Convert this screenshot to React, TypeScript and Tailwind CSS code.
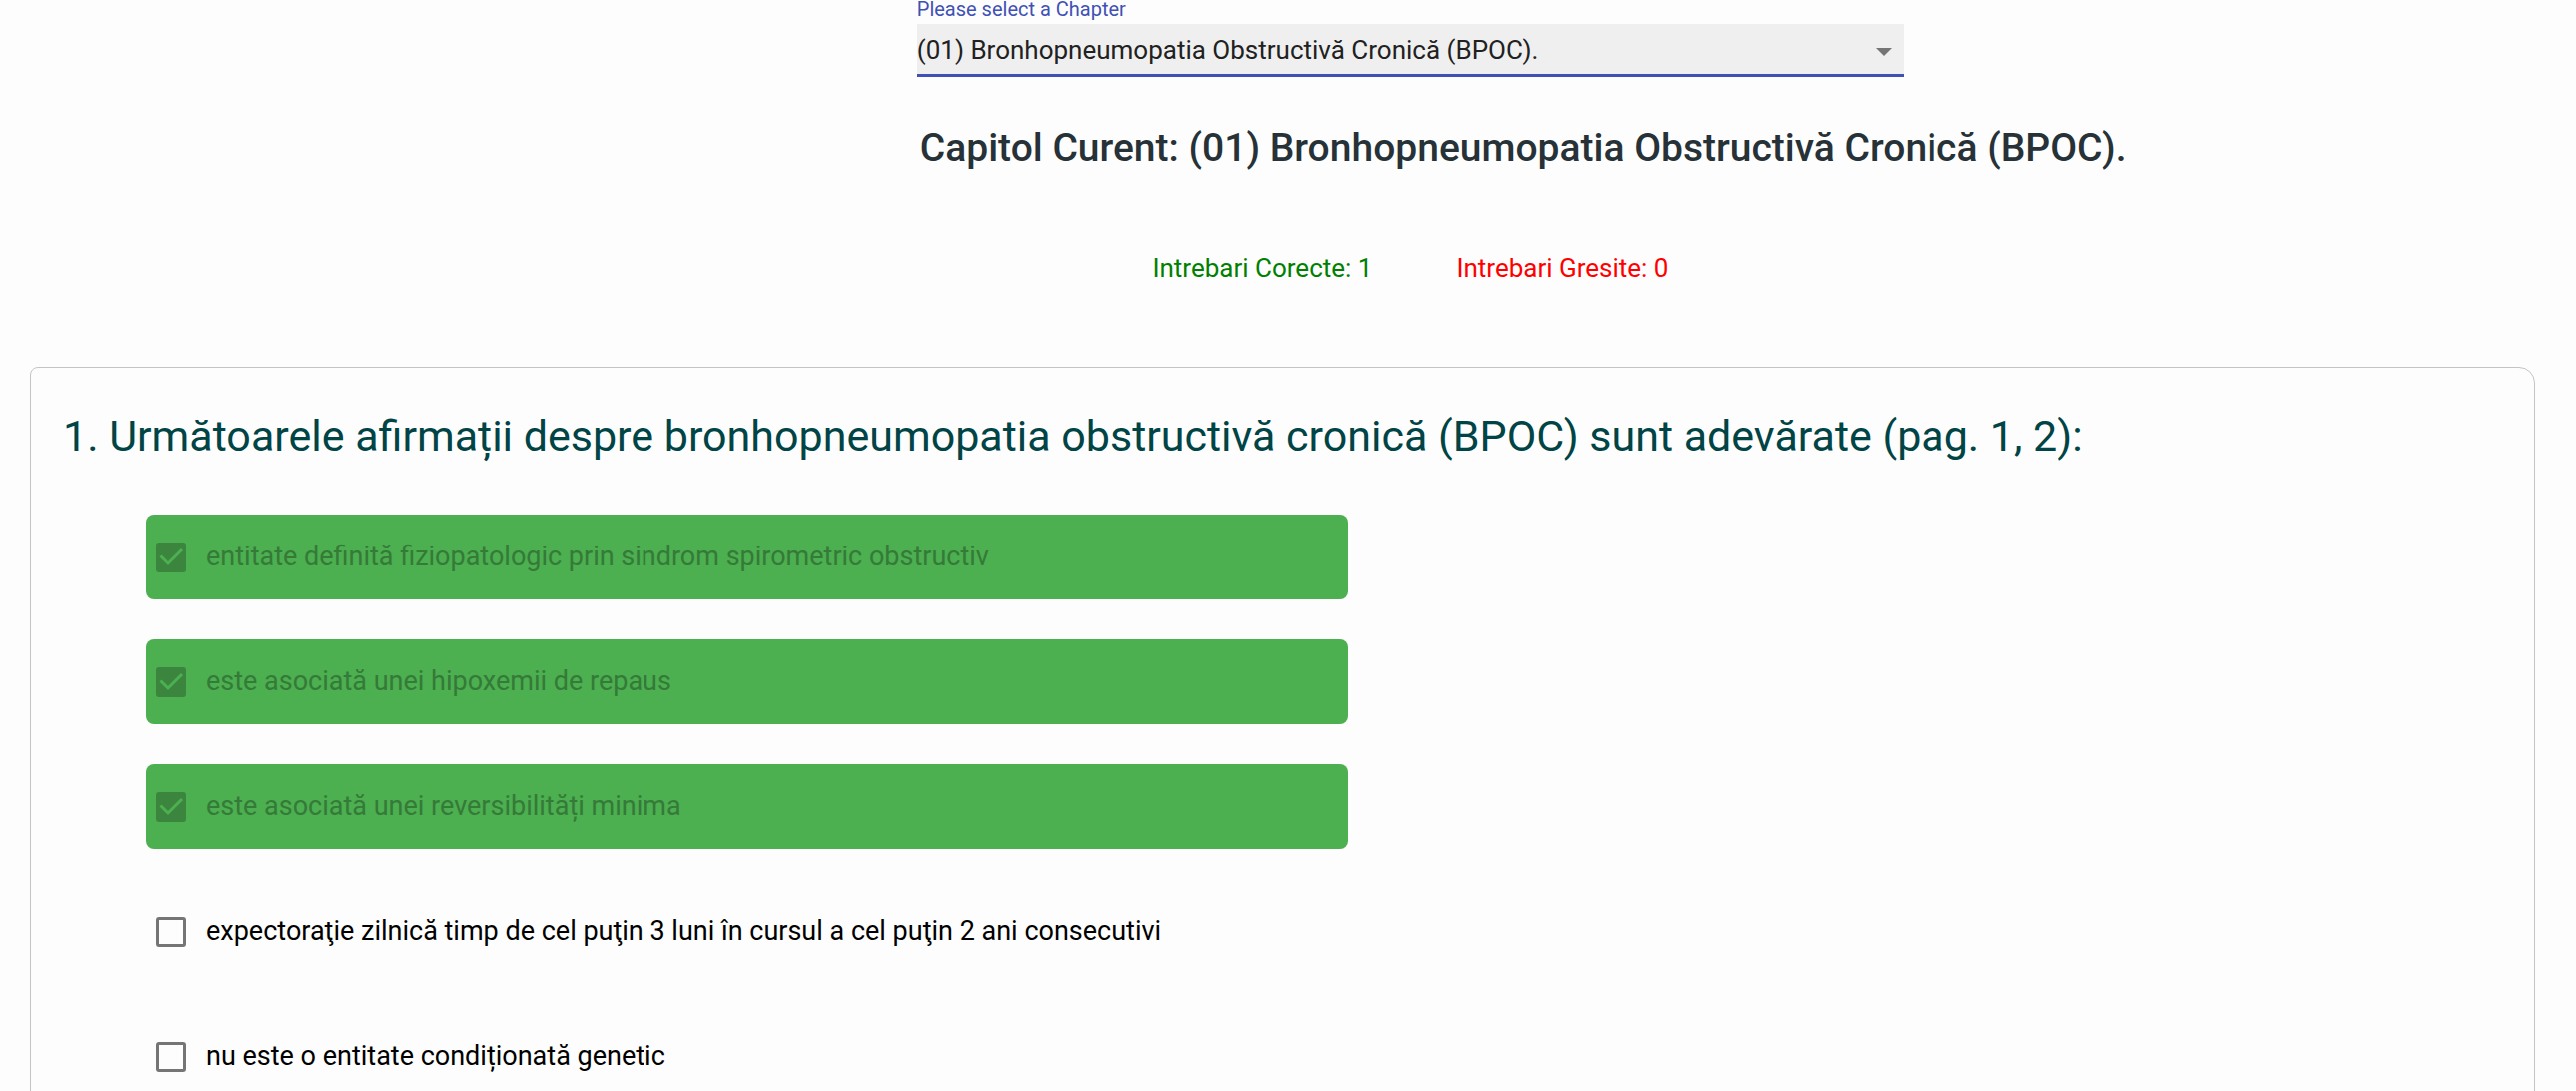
import { useState } from "react";

const CHAPTERS = ["(01) Bronhopneumopatia Obstructivă Cronică (BPOC)."];

const OPTIONS = [
  { id: "a", text: "entitate definită fiziopatologic prin sindrom spirometric obstructiv", correct: true },
  { id: "b", text: "este asociată unei hipoxemii de repaus", correct: true },
  { id: "c", text: "este asociată unei reversibilități minima", correct: true },
  { id: "d", text: "expectoraţie zilnică timp de cel puţin 3 luni în cursul a cel puţin 2 ani consecutivi", correct: false },
  { id: "e", text: "nu este o entitate condiționată genetic", correct: false },
];

type OptionProps = { id: string; text: string; correct: boolean };

function Option({ id, text, correct }: OptionProps) {
  const [checked, setChecked] = useState(correct);
  return (
    <li
      className={
        correct
          ? "flex h-[85px] items-center rounded-lg bg-[#4caf50] pl-[10px] text-[#357a38]"
          : "flex h-[85px] items-center rounded-lg pl-[10px] text-black"
      }
    >
      <span className="relative flex size-[30px] shrink-0">
        <input
          id={id}
          type="checkbox"
          checked={checked}
          disabled={correct}
          onChange={(e) => setChecked(e.target.checked)}
          className="size-full appearance-none rounded-[3px] border-[3px] border-[#757575] checked:border-[#3b853e] checked:bg-[#3b853e]"
        />
        {checked && (
          <svg viewBox="0 0 30 30" className="pointer-events-none absolute inset-0 size-full" fill="none" aria-hidden="true">
            <path d="M4.5 13.5 L12 21 L26 7" stroke="#4caf50" strokeWidth="3" />
          </svg>
        )}
      </span>
      <label htmlFor={id} className="pb-0.5 pl-5 text-[27px] leading-8">
        {text}
      </label>
    </li>
  );
}

export default function App() {
  return (
    <main className="h-screen overflow-hidden bg-[#fdfdfd] font-['Roboto',sans-serif]">
      <header className="ml-[35.6%] w-[38.3%]">
        <label htmlFor="chapter" className="block h-6 text-[20px] leading-[18px] text-[#3f51b5]">
          Please select a Chapter
        </label>
        <div className="relative border-b-[3px] border-[#3f51b5]">
          <select
            id="chapter"
            className="block h-[50px] w-full appearance-none bg-[#efefef] pt-0.5 text-[26px] leading-8 text-[#212121]"
          >
            {CHAPTERS.map((c) => (
              <option key={c}>{c}</option>
            ))}
          </select>
          <svg viewBox="0 0 16 8" className="pointer-events-none absolute top-6 right-3 h-2 w-4" aria-hidden="true">
            <path d="M0 0 H16 L8 8 Z" fill="#757575" />
          </svg>
        </div>
        <h1 className="mt-[47px] pl-[3px] text-[39px] leading-12 font-medium whitespace-nowrap text-[#263238]">
          Capitol Curent: {CHAPTERS[0]}
        </h1>
        <div className="mt-20 flex justify-center gap-[84px] text-[26px] leading-8">
          <p className="text-[#008000]">Intrebari Corecte: 1</p>
          <p className="text-[#ff0000]">Intrebari Gresite: 0</p>
        </div>
      </header>
      <section className="mt-[83px] mr-[41px] ml-[30px] rounded-l-lg rounded-r-2xl border border-[#c4c4c4] px-8 pt-[38px] pb-20">
        <h2 className="text-[43px] leading-[60px] text-[#004446]">
          1. Următoarele afirmații despre bronhopneumopatia obstructivă cronică (BPOC) sunt adevărate (pag. 1, 2):
        </h2>
        <ul className="mt-[49px] ml-[83px] flex w-[49.3%] flex-col gap-10">
          {OPTIONS.map((o) => (
            <Option key={o.id} {...o} />
          ))}
        </ul>
      </section>
    </main>
  );
}
